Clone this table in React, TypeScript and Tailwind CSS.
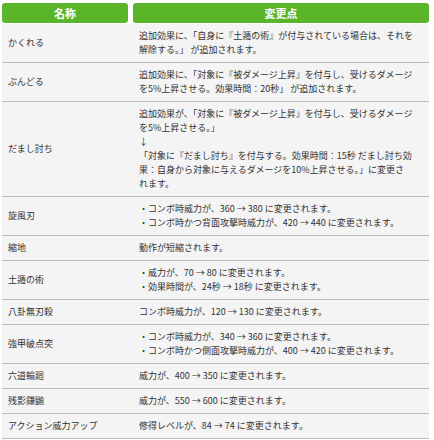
import React from "react";

type Row = { name: string; lines: string[] };

const rows: Row[] = [
  {
    name: "かくれる",
    lines: [
      "追加効果に、「自身に『土遁の術』が付与されている場合は、それを",
      "解除する。」 が追加されます。",
    ],
  },
  {
    name: "ぶんどる",
    lines: [
      "追加効果に、「対象に『被ダメージ上昇』を付与し、受けるダメージ",
      "を5%上昇させる。効果時間：20秒」 が追加されます。",
    ],
  },
  {
    name: "だまし討ち",
    lines: [
      "追加効果が、「対象に『被ダメージ上昇』を付与し、受けるダメージ",
      "を5%上昇させる。」",
      "↓",
      "「対象に『だまし討ち』を付与する。効果時間：15秒 だまし討ち効",
      "果：自身から対象に与えるダメージを10%上昇させる。」に変更さ",
      "れます。",
    ],
  },
  {
    name: "旋風刃",
    lines: [
      "・コンボ時威力が、360 → 380 に変更されます。",
      "・コンボ時かつ背面攻撃時威力が、420 → 440 に変更されます。",
    ],
  },
  { name: "縮地", lines: ["動作が短縮されます。"] },
  {
    name: "土遁の術",
    lines: [
      "・威力が、70 → 80 に変更されます。",
      "・効果時間が、24秒 → 18秒 に変更されます。",
    ],
  },
  { name: "八卦無刃殺", lines: ["コンボ時威力が、120 → 130 に変更されます。"] },
  {
    name: "強甲破点突",
    lines: [
      "・コンボ時威力が、340 → 360 に変更されます。",
      "・コンボ時かつ側面攻撃時威力が、400 → 420 に変更されます。",
    ],
  },
  { name: "六道輪廻", lines: ["威力が、400 → 350 に変更されます。"] },
  { name: "残影鎌鼬", lines: ["威力が、550 → 600 に変更されます。"] },
  { name: "アクション威力アップ", lines: ["修得レベルが、84 → 74 に変更されます。"] },
];

const App = () => {
  return (
    <div
      className="w-[434px] h-[440px] bg-white overflow-hidden pt-[3px] pl-[2px] pr-[5px] text-[#333]"
      style={{ fontFamily: '"Noto Sans CJK JP", "Noto Sans", sans-serif' }}
    >
      {/* header */}
      <div className="flex gap-[5px] h-[20px]">
        <div className="w-[126px] rounded-[3px] bg-[#5bb52b] text-white font-bold text-[11px] flex items-center justify-center">
          名称
        </div>
        <div className="flex-1 rounded-[3px] bg-[#5bb52b] text-white font-bold text-[11px] flex items-center justify-center">
          変更点
        </div>
      </div>

      <div className="mt-[1px]">
        {rows.map((row) => (
          <div
            key={row.name}
            className="flex bg-[#f4f4f4] border-b border-[#bdbdbd] shadow-[0_1px_0_#ffffff]"
          >
            <div className="w-[131px] pl-[6px] flex items-center text-[9px] leading-[14px]">
              {row.name}
            </div>
            <div className="flex-1 pl-[6px] py-[5px] text-[9px] leading-[14px] whitespace-nowrap">
              {row.lines.map((l, i) => (
                <div key={i}>{l}</div>
              ))}
            </div>
          </div>
        ))}
      </div>
    </div>
  );
};

export default App;
